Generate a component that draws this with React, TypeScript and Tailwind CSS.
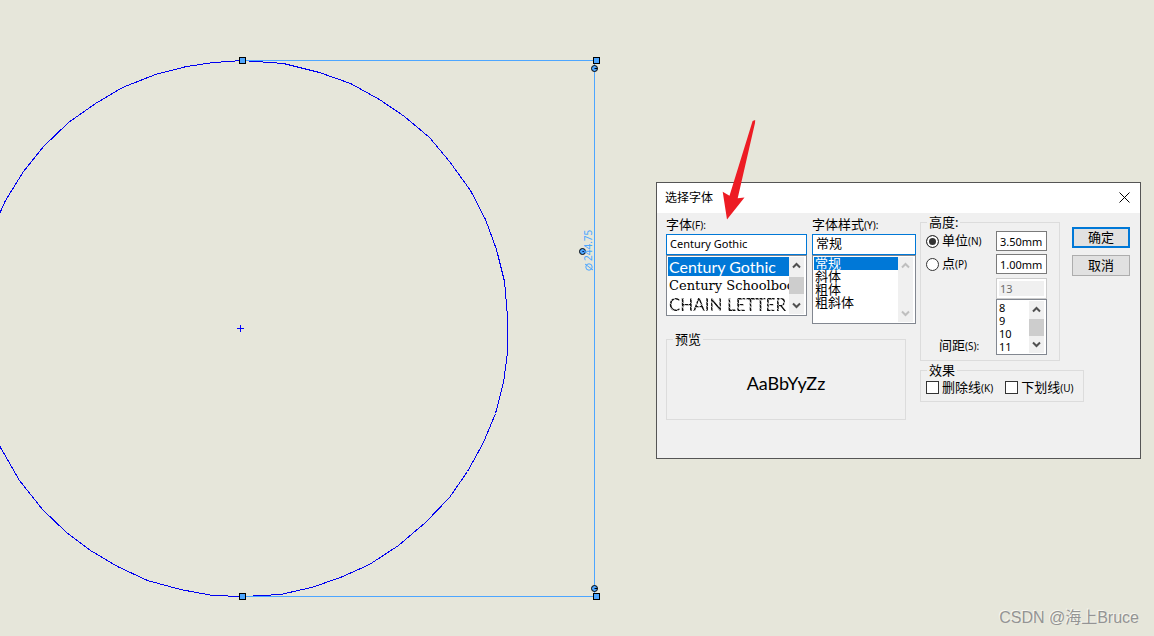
import React from 'react';

const outline =
  '242,60 283,63 319,72 350,83 379,99 404,116 429,137 449,161 470,190 485,219 496,249 504,281 507,316 507,352 503,382 495,413 483,442 467,471 449,497 425,522 398,545 369,564 340,577 311,587 280,594 243,596 212,595 180,589 147,580 117,566 90,550 66,532 42,509 19,480 0,447 -14,416 -23,380 -27,328 -24,285 -14,242 5,200 23,171 43,146 68,122 95,103 122,87 155,74 186,66 213,62 242,60';

const handles = [
  [239, 57],
  [593, 57],
  [239, 593],
  [593, 593],
];

const grips = [
  [594, 68],
  [582, 251],
  [594, 588],
];

interface ListItem {
  name: string;
  style?: string;
}

const fonts: ListItem[] = [
  { name: 'Century Gothic', style: "font-['Century_Gothic',Lato,sans-serif] text-[16px]" },
  { name: 'Century Schoolbook', style: "font-['Century_Schoolbook','DejaVu_Serif',serif] text-[13px]" },
  {
    name: 'CHAIN LETTER',
    style:
      "font-['Chain_Letter',Lato,sans-serif] text-[17px] bg-[repeating-linear-gradient(45deg,#111_0px,#111_2px,#999_2px,#999_3px)] bg-clip-text text-transparent",
  },
];
const styles: ListItem[] = [{ name: '常规' }, { name: '斜体' }, { name: '粗体' }, { name: '粗斜体' }];
const points: ListItem[] = [{ name: '8' }, { name: '9' }, { name: '10' }, { name: '11' }];

const Sketch: React.FC = () => (
  <svg className="absolute inset-0 h-full w-full" aria-hidden="true">
    <g fill="none" shapeRendering="crispEdges">
      <g transform="translate(0.5 0.5)">
        <polyline points={outline} stroke="#0000f0" />
        <path d="M242 60H594M594 60V596M242 596H594" stroke="#4da6ff" />
      </g>
      <path d="M237 328h7v1h-7zM240 325h1v7h-1z" fill="#0000ff" />
      {handles.map(([x, y]) => (
        <g key={`${x}-${y}`}>
          <rect x={x} y={y} width="7" height="7" fill="#000" />
          <rect x={x + 1} y={y + 1} width="5" height="5" fill="#4da6ff" />
        </g>
      ))}
    </g>
    {grips.map(([x, y]) => (
      <g key={`${x}-${y}`} transform={`translate(${x + 0.5} ${y + 0.5})`}>
        <circle r="3" fill="#4da6ff" stroke="#000" />
        <path d="M0 0h3" stroke="#000" />
      </g>
    ))}
    <g transform="translate(592 271) rotate(-90)">
      <circle cx="4" cy="-3" r="3.2" fill="none" stroke="#4da6ff" />
      <path d="M1 1L7 -7" stroke="#4da6ff" />
      <text x="10" y="0" fontSize="10" fill="#4da6ff" className="font-['Noto_Sans',sans-serif]">
        244.75
      </text>
    </g>
  </svg>
);

const ScrollBar: React.FC<{ disabled?: boolean; thumb?: boolean }> = ({ disabled, thumb }) => {
  const color = disabled ? 'text-[#bfbfbf]' : 'text-[#505050]';
  return (
    <div className={`flex w-[15px] shrink-0 flex-col justify-between bg-[#f0f0f0] ${color}`}>
      <button type="button" aria-label="Scroll up" disabled={disabled} className="flex h-[17px] items-center justify-center">
        <svg width="9" height="7" viewBox="0 0 9 7" fill="none" stroke="currentColor" strokeWidth="2">
          <path d="M1 5.5L4.5 2L8 5.5" />
        </svg>
      </button>
      {thumb && <div className="h-[17px] bg-[#cdcdcd]" />}
      <button type="button" aria-label="Scroll down" disabled={disabled} className="flex h-[17px] items-center justify-center">
        <svg width="9" height="7" viewBox="0 0 9 7" fill="none" stroke="currentColor" strokeWidth="2">
          <path d="M1 1.5L4.5 5L8 1.5" />
        </svg>
      </button>
    </div>
  );
};

interface ListBoxProps {
  label: string;
  items: ListItem[];
  value?: string;
  onSelect: (name: string) => void;
  height: string;
  row: string;
  disabled?: boolean;
}

const ListBox: React.FC<ListBoxProps> = ({ label, items, value, onSelect, height, row, disabled }) => (
  <div className={`flex border border-[#828790] bg-white py-px pl-px pr-0.5 ${height}`}>
    <ul role="listbox" aria-label={label} className="min-w-0 flex-1 overflow-x-clip">
      {items.map(item => (
        <li
          key={item.name}
          role="option"
          aria-selected={item.name === value}
          onClick={() => onSelect(item.name)}
          className={`whitespace-nowrap ${row} ${item.name === value ? 'bg-[#0078d7] text-white' : ''}`}
        >
          <span className={`block ${item.style ?? ''}`}>{item.name}</span>
        </li>
      ))}
    </ul>
    <ScrollBar disabled={disabled} thumb={!disabled} />
  </div>
);

const Key: React.FC<{ children: React.ReactNode }> = ({ children }) => <span className="text-[10px]">{children}</span>;

const sizeInput = 'h-5 w-full border border-[#7a7a7a] bg-white pl-[3px] text-[11px] outline-none';
const radio =
  'h-[13px] w-[13px] appearance-none rounded-full border border-[#333] bg-white checked:bg-[#333] checked:shadow-[inset_0_0_0_2px_#fff]';
const tick = 'h-[13px] w-[13px] shrink-0 appearance-none border border-[#333] bg-white checked:bg-[#333]';

const FontDialog: React.FC = () => {
  const [font, setFont] = React.useState('Century Gothic');
  const [style, setStyle] = React.useState('常规');
  const [unit, setUnit] = React.useState('unit');
  const [point, setPoint] = React.useState<string>();

  return (
    <div
      role="dialog"
      aria-labelledby="dialog-title"
      className="absolute left-[656px] top-[182px] w-[485px] border border-[#555] bg-[#f0f0f0] font-['Noto_Sans','Noto_Sans_CJK_SC',sans-serif] text-[13px] text-black"
    >
      <div className="flex h-[30px] items-center justify-between bg-white pl-2 pr-2.5">
        <h1 id="dialog-title" className="text-[12px]">选择字体</h1>
        <button type="button" aria-label="Close" className="pb-0.5">
          <svg width="11" height="11" viewBox="0 0 11 11" stroke="#000" fill="none">
            <path d="M0.5 0.5L10.5 10.5M10.5 0.5L0.5 10.5" />
          </svg>
        </button>
      </div>

      <div className="flex gap-1 pb-[38px] pl-[9px] pt-[3px]">
        <div className="w-[250px] shrink-0">
          <div className="flex gap-[5px]">
            <div className="w-[141px]">
              <label htmlFor="font" className="block h-[18px] leading-4">字体<Key>(F):</Key></label>
              <input
                id="font"
                value={font}
                onChange={e => setFont(e.target.value)}
                className="block h-[21px] w-full border border-[#0078d7] bg-white px-[3px] pb-0.5 text-[11px] outline-none"
              />
              <ListBox label="字体" items={fonts} value={font} onSelect={setFont} height="h-[61px]" row="h-[19px] pl-px leading-[19px]" />
            </div>

            <div className="w-[104px]">
              <label htmlFor="style" className="block h-[18px] leading-4">字体样式<Key>(Y):</Key></label>
              <input
                id="style"
                value={style}
                onChange={e => setStyle(e.target.value)}
                className="block h-[21px] w-full border border-[#0078d7] bg-white px-[3px] pb-1 outline-none"
              />
              <ListBox label="字体样式" items={styles} value={style} onSelect={setStyle} height="h-[69px]" row="h-[13px] pl-px leading-[13px]" disabled />
            </div>
          </div>

          <fieldset className="mt-[9px] h-[87px] w-[240px] border border-[#dcdcdc]">
            <legend className="ml-1.5 px-0.5 leading-[13px]">预览</legend>
            <p className="flex h-[74px] items-center justify-center font-['Century_Gothic',Lato,sans-serif] text-[18px]">AaBbYyZz</p>
          </fieldset>
        </div>

        <div>
          <div className="flex gap-3">
            <fieldset className="h-[145px] w-[140px] border border-[#dcdcdc] pl-[5px] pr-3">
              <legend className="ml-px px-0.5 leading-[13px]">高度:</legend>
              <div className="flex justify-between pt-0.5">
                <div className="flex h-[124px] flex-col">
                  <label className="flex h-5 items-center gap-[3px]">
                    <input type="radio" name="unit" checked={unit === 'unit'} onChange={() => setUnit('unit')} className={radio} />
                    <span>单位<Key>(N)</Key></span>
                  </label>
                  <label className="mt-[3px] flex h-5 items-center gap-[3px]">
                    <input type="radio" name="unit" checked={unit === 'point'} onChange={() => setUnit('point')} className={radio} />
                    <span>点<Key>(P)</Key></span>
                  </label>
                  <label htmlFor="spacing" className="mt-auto pl-[13px] leading-[18px]">间距<Key>(S):</Key></label>
                </div>
                <div className="flex w-[51px] flex-col">
                  <input aria-label="单位" defaultValue="3.50mm" className={sizeInput} />
                  <input id="spacing" defaultValue="1.00mm" className={`mt-[3px] ${sizeInput}`} />
                  <input
                    aria-label="点"
                    disabled
                    defaultValue="13"
                    className="mt-1 h-[21px] w-full border border-[#ccc] bg-[#f0f0f0] pl-[3px] text-[11px] text-[#6d6d6d] shadow-[inset_0_0_0_2px_#fff]"
                  />
                  <ListBox label="点数" items={points} value={point} onSelect={setPoint} height="h-14" row="h-[13px] pl-px text-[11px] leading-[13px]" />
                </div>
              </div>
            </fieldset>

            <div className="flex flex-col gap-[7px] pt-[11px]">
              <button type="button" className="h-[21px] w-[58px] border-2 border-[#0078d7] bg-[#e1e1e1] leading-[17px]">确定</button>
              <button type="button" className="h-[21px] w-[58px] border border-[#adadad] bg-[#e1e1e1] leading-[17px]">取消</button>
            </div>
          </div>

          <fieldset className="mt-[3px] h-[38px] w-[164px] border border-[#dcdcdc] pl-[5px]">
            <legend className="ml-px px-0.5 leading-[13px]">效果</legend>
            <div className="flex gap-3 whitespace-nowrap leading-[20px]">
              <label className="flex items-center gap-[3px]">
                <input type="checkbox" className={tick} />
                <span>删除线<Key>(K)</Key></span>
              </label>
              <label className="flex items-center gap-[3px]">
                <input type="checkbox" className={tick} />
                <span>下划线<Key>(U)</Key></span>
              </label>
            </div>
          </fieldset>
        </div>
      </div>
    </div>
  );
};

export default function App() {
  return (
    <main className="relative min-h-screen overflow-hidden bg-[#e6e6da]">
      <Sketch />
      <FontDialog />
      {/* callout arrow over the font field */}
      <svg className="pointer-events-none absolute left-[720px] top-[118px]" width="36" height="104" viewBox="720 118 36 104" aria-hidden="true">
        <path d="M727 219.5L722.7 191.7L729.5 195.7L752.6 121L755.2 120L755 123L737.7 198.3L744.5 197.5Z" fill="#ed1c24" />
      </svg>
      <p className="absolute bottom-1.5 right-[15px] font-['Liberation_Sans','Noto_Sans_CJK_SC',sans-serif] text-[16px] leading-6 text-[#949494] [text-shadow:-1px_-1px_0_#f6f6f0]">
        CSDN @海上Bruce
      </p>
    </main>
  );
}
